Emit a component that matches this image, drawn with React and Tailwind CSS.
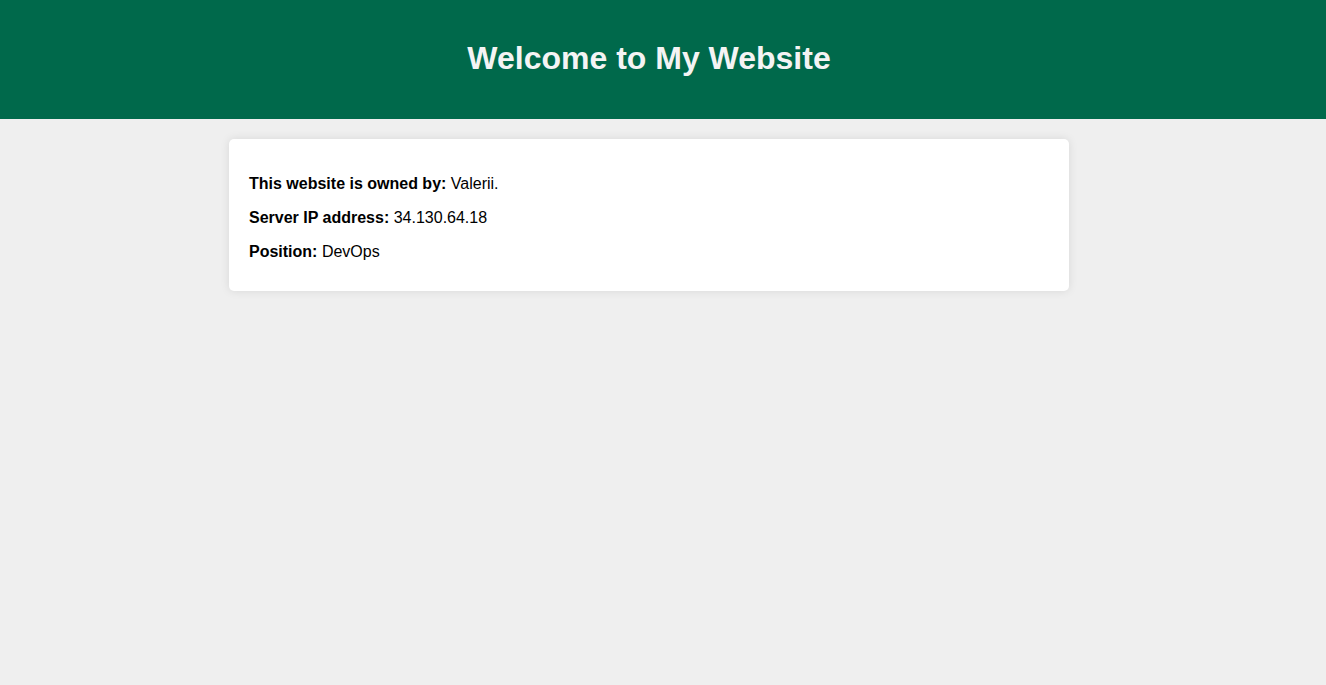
import React from "react";

const info = [
  { label: "This website is owned by:", value: "Valerii." },
  { label: "Server IP address:", value: "34.130.64.18" },
  { label: "Position:", value: "DevOps" },
];

const App = () => {
  return (
    <div className="min-h-[685px] bg-[#efefef] font-['Liberation_Sans',Arial,sans-serif] text-black pr-[28px]">
      <header className="bg-[#00694b] h-[119px] -mr-[28px] pr-[28px] flex items-center justify-center">
        <h1 className="text-[32px] leading-[37px] font-bold text-[#f4f4f4] -mt-[2px]">
          Welcome to My Website
        </h1>
      </header>

      <div className="w-[840px] mx-auto mt-5 bg-white rounded-[5px] shadow-[0_0_10px_rgba(0,0,0,0.1)] px-5 pt-[36px] pb-[30px] flex flex-col gap-4">
        {info.map((item) => (
          <p key={item.label} className="text-base leading-[18px]">
            <strong className="font-bold">{item.label}</strong> {item.value}
          </p>
        ))}
      </div>
    </div>
  );
};

export default App;
